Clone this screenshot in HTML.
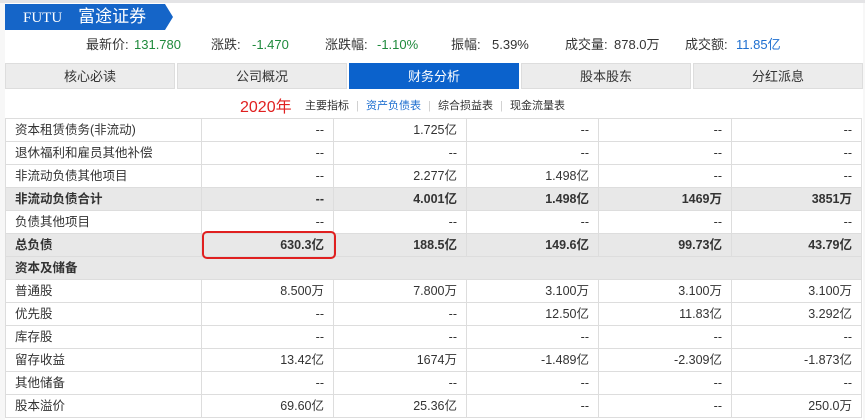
<!DOCTYPE html>
<html><head><meta charset="utf-8"><style>
*{margin:0;padding:0;box-sizing:border-box}
body{width:865px;height:420px;background:#f7f7f7;font-family:"Liberation Sans","Noto Sans CJK SC",sans-serif;color:#333;position:relative;overflow:hidden}
.top{position:absolute;left:0;top:0;width:865px;height:3px;background:#e4e4e6}
.white{position:absolute;left:5px;top:3px;width:858px;height:417px;background:#fff}
.banner{position:absolute;left:5px;top:4px;width:160px;height:26px;background:#1565c8;color:#fff;font-size:17px;line-height:26px;padding-left:18px}
.banner:after{content:"";position:absolute;right:-8px;top:0;border-left:8px solid #1565c8;border-top:13px solid transparent;border-bottom:13px solid transparent}
.banner .f{font-family:"Liberation Serif",serif;font-size:15px;margin-right:16px}
.stats{position:absolute;top:37px;left:0;font-size:13px;white-space:nowrap;line-height:16px}
.stats span{position:absolute;top:0}
.g{color:#1f8a3c}.b{color:#1e6fd0}
.tabs{position:absolute;top:63px;left:5px;height:26px}
.tab{position:absolute;top:0;height:26px;background:#ececec;border:1px solid #ddd;font-size:13px;line-height:25px;text-align:center}
.tab.on{background:#0b62cc;color:#fff;border-color:#0b62cc}
.sub{position:absolute;top:94px;font-size:11px;white-space:nowrap}
table{position:absolute;left:5px;top:118px;border-collapse:collapse;font-size:12.5px}
td{height:23px;line-height:21px;border:1px solid #ddd;padding:0 9px;text-align:right;white-space:nowrap;vertical-align:middle}
td:first-child{text-align:left;width:196px}
tr.gr td{background:#e8e8e8;font-weight:bold}
.box{position:absolute;left:202px;top:231px;width:134px;height:28px;border:2px solid #e02020;border-radius:5px}
</style></head><body>
<div class="top"></div><div class="white"></div>
<div class="banner"><span class="f">FUTU</span>富途证券</div>
<div class="stats">
<span style="left:86px">最新价:</span><span class="g" style="left:134px">131.780</span>
<span style="left:211px">涨跌:</span><span class="g" style="left:252px">-1.470</span>
<span style="left:325px">涨跌幅:</span><span class="g" style="left:377px">-1.10%</span>
<span style="left:451px">振幅:</span><span style="left:492px">5.39%</span>
<span style="left:565px">成交量:</span><span style="left:614px">878.0万</span>
<span style="left:685px">成交额:</span><span class="b" style="left:736px">11.85亿</span>
</div>
<div class="tabs">
<div class="tab" style="left:0;width:170px">核心必读</div>
<div class="tab" style="left:172px;width:170px">公司概况</div>
<div class="tab on" style="left:344px;width:170px">财务分析</div>
<div class="tab" style="left:516px;width:170px">股本股东</div>
<div class="tab" style="left:688px;width:170px">分红派息</div>
</div>
<div class="sub" style="left:240px;top:93px;color:#e02020;font-size:16px">2020年</div>
<div class="sub" style="left:305px;top:97px">主要指标 <span style="color:#ccc;margin:0 4px">|</span> <span class="b">资产负债表</span> <span style="color:#ccc;margin:0 4px">|</span> 综合损益表 <span style="color:#ccc;margin:0 4px">|</span> 现金流量表</div>
<table>
<colgroup><col style="width:196px"><col style="width:132px"><col style="width:133px"><col style="width:132px"><col style="width:133px"><col style="width:130px"></colgroup>
<tr><td>资本租赁债务(非流动)</td><td>--</td><td>1.725亿</td><td>--</td><td>--</td><td>--</td></tr>
<tr><td>退休福利和雇员其他补偿</td><td>--</td><td>--</td><td>--</td><td>--</td><td>--</td></tr>
<tr><td>非流动负债其他项目</td><td>--</td><td>2.277亿</td><td>1.498亿</td><td>--</td><td>--</td></tr>
<tr class="gr"><td>非流动负债合计</td><td>--</td><td>4.001亿</td><td>1.498亿</td><td>1469万</td><td>3851万</td></tr>
<tr><td>负债其他项目</td><td>--</td><td>--</td><td>--</td><td>--</td><td>--</td></tr>
<tr class="gr"><td>总负债</td><td>630.3亿</td><td>188.5亿</td><td>149.6亿</td><td>99.73亿</td><td>43.79亿</td></tr>
<tr class="gr"><td colspan="6" style="text-align:left">资本及储备</td></tr>
<tr><td>普通股</td><td>8.500万</td><td>7.800万</td><td>3.100万</td><td>3.100万</td><td>3.100万</td></tr>
<tr><td>优先股</td><td>--</td><td>--</td><td>12.50亿</td><td>11.83亿</td><td>3.292亿</td></tr>
<tr><td>库存股</td><td>--</td><td>--</td><td>--</td><td>--</td><td>--</td></tr>
<tr><td>留存收益</td><td>13.42亿</td><td>1674万</td><td>-1.489亿</td><td>-2.309亿</td><td>-1.873亿</td></tr>
<tr><td>其他储备</td><td>--</td><td>--</td><td>--</td><td>--</td><td>--</td></tr>
<tr><td>股本溢价</td><td>69.60亿</td><td>25.36亿</td><td>--</td><td>--</td><td>250.0万</td></tr>
</table>
<div class="box"></div>
</body></html>
